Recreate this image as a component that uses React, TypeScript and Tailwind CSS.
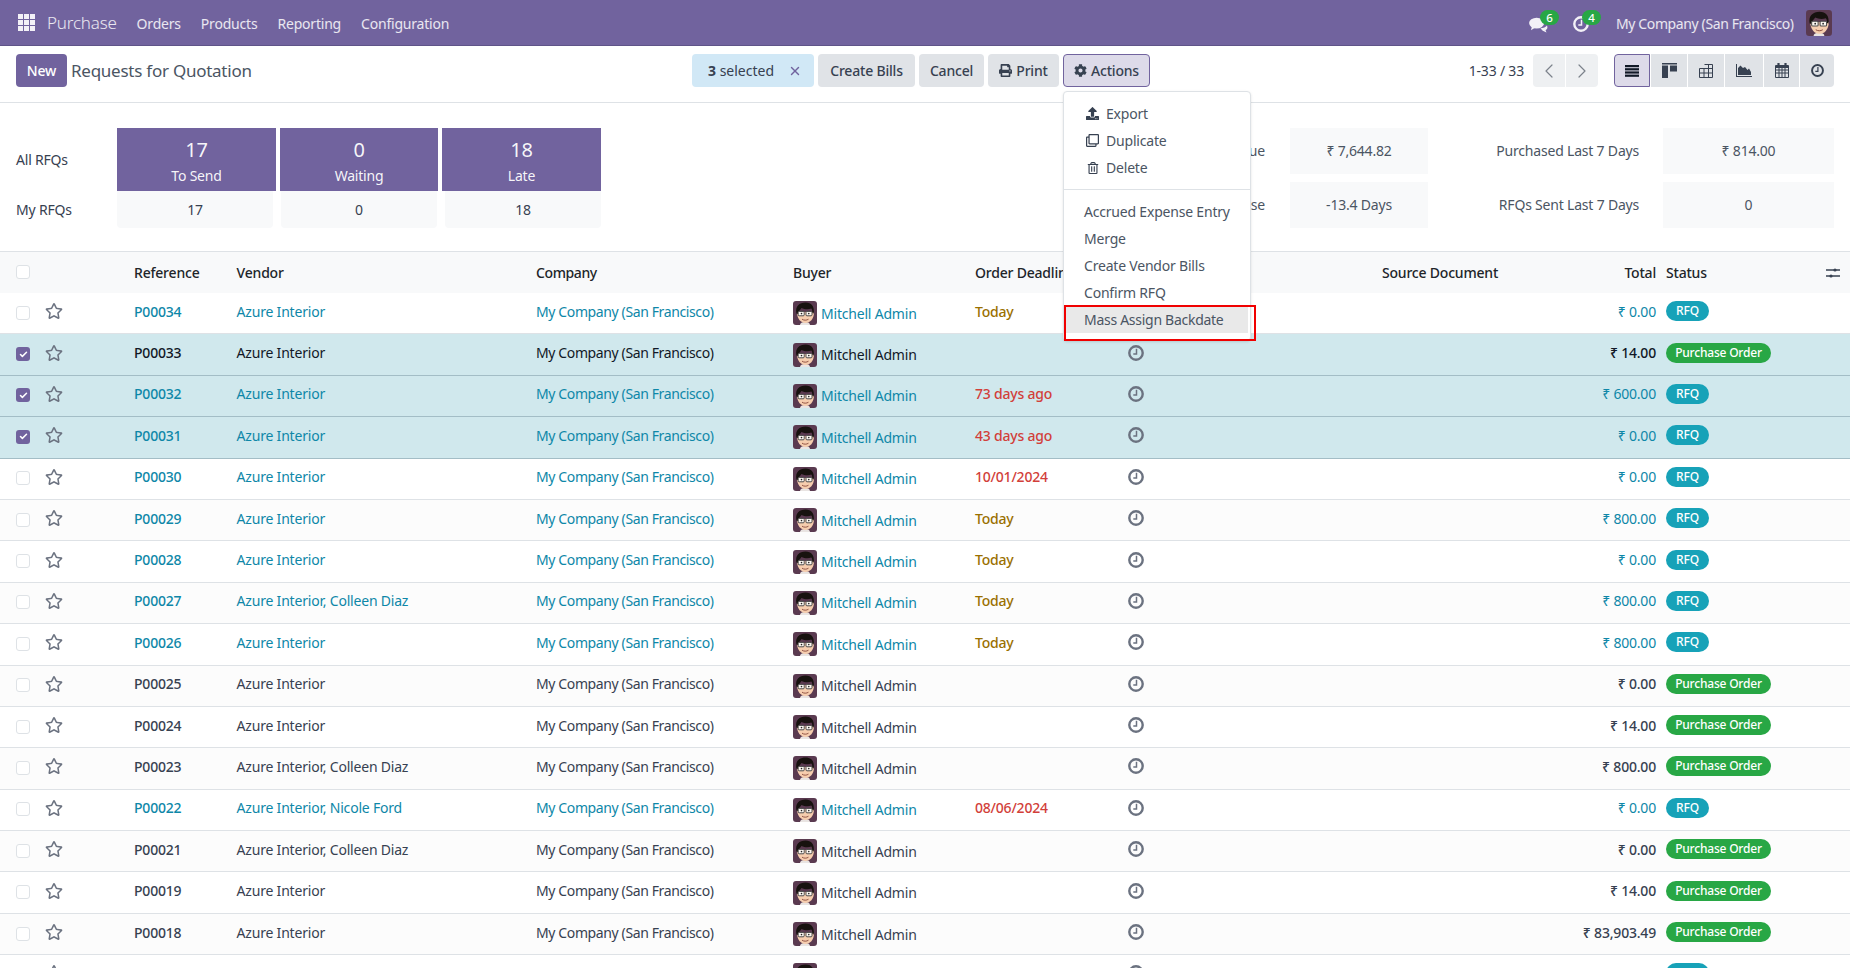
import React from "react";
import { FaRegStar, FaCog, FaPrint, FaRegClone, FaRegTrashAlt, FaUpload } from "react-icons/fa";
import { ChevronLeft, ChevronRight, X, Check } from "lucide-react";

function Avatar({ size = 24 }: { size?: number }) {
  return (
    <svg width={size} height={size} viewBox="0 0 24 24" className="shrink-0">
      <rect width="24" height="24" rx="3" fill="#5a3a50" />
      <path d="M7 24c0-2 2-3 5-3s5 1 5 3z" fill="#e9e4e2" />
      <path d="M4 11c0 7 4 11 8.500 11S21 18 21 11z" fill="#f6cdae" />
      <path d="M3.400 12.500C2 5 6.500 1.500 12.500 1.500c6 0 9 3.500 8.300 11l-1.500-.5c0-2 0-3.500-1-4.500-3 1.300-7 .8-9.800-.5C7.500 8.500 5.500 10 5 13z" fill="#17120f" />
      <rect x="5.200" y="10.400" width="6" height="4.400" rx="1" fill="#fbf6f0" stroke="#4a4a4a" strokeWidth="1" />
      <rect x="13" y="10.400" width="6" height="4.400" rx="1" fill="#fbf6f0" stroke="#4a4a4a" strokeWidth="1" />
      <circle cx="8.500" cy="12.600" r=".8" fill="#222" />
      <circle cx="15.800" cy="12.600" r=".8" fill="#222" />
      <path d="M9 18.200c2 1.300 4.500 1.300 6.500 0" stroke="#8a4b3c" strokeWidth=".9" fill="none" />
    </svg>
  );
}

function Cb({ checked }: { checked?: boolean }) {
  return checked ? (
    <span className="w-[14px] h-[14px] rounded-[3px] bg-[#71639e] flex items-center justify-center">
      <Check size={9} strokeWidth={4} className="text-white" />
    </span>
  ) : (
    <span className="w-[14px] h-[14px] rounded-[3px] border border-[#dee2e6] bg-white block" />
  );
}

function ClockO({ size = 16, color = "#6b7280" }: { size?: number; color?: string }) {
  return (
    <svg width={size} height={size} viewBox="0 0 16 16" fill="none" stroke={color} strokeWidth="2.400" className="shrink-0">
      <circle cx="8" cy="8" r="6.700" />
      <path d="M8.500 3.800V9H5.300" strokeWidth="1.500" />
    </svg>
  );
}

type R = { ref: string; vendor: string; dl?: string; dlc?: string; total: string; st: "RFQ" | "PO"; sel?: boolean };
const rows: R[] = [
  { ref: "P00034", vendor: "Azure Interior", dl: "Today", dlc: "t", total: "₹ 0.00", st: "RFQ" },
  { ref: "P00033", vendor: "Azure Interior", total: "₹ 14.00", st: "PO", sel: true },
  { ref: "P00032", vendor: "Azure Interior", dl: "73 days ago", dlc: "r", total: "₹ 600.00", st: "RFQ", sel: true },
  { ref: "P00031", vendor: "Azure Interior", dl: "43 days ago", dlc: "r", total: "₹ 0.00", st: "RFQ", sel: true },
  { ref: "P00030", vendor: "Azure Interior", dl: "10/01/2024", dlc: "r", total: "₹ 0.00", st: "RFQ" },
  { ref: "P00029", vendor: "Azure Interior", dl: "Today", dlc: "t", total: "₹ 800.00", st: "RFQ" },
  { ref: "P00028", vendor: "Azure Interior", dl: "Today", dlc: "t", total: "₹ 0.00", st: "RFQ" },
  { ref: "P00027", vendor: "Azure Interior, Colleen Diaz", dl: "Today", dlc: "t", total: "₹ 800.00", st: "RFQ" },
  { ref: "P00026", vendor: "Azure Interior", dl: "Today", dlc: "t", total: "₹ 800.00", st: "RFQ" },
  { ref: "P00025", vendor: "Azure Interior", total: "₹ 0.00", st: "PO" },
  { ref: "P00024", vendor: "Azure Interior", total: "₹ 14.00", st: "PO" },
  { ref: "P00023", vendor: "Azure Interior, Colleen Diaz", total: "₹ 800.00", st: "PO" },
  { ref: "P00022", vendor: "Azure Interior, Nicole Ford", dl: "08/06/2024", dlc: "r", total: "₹ 0.00", st: "RFQ" },
  { ref: "P00021", vendor: "Azure Interior, Colleen Diaz", total: "₹ 0.00", st: "PO" },
  { ref: "P00019", vendor: "Azure Interior", total: "₹ 14.00", st: "PO" },
  { ref: "P00018", vendor: "Azure Interior", total: "₹ 83,903.49", st: "PO" },
  { ref: "P00017", vendor: "Azure Interior, Nicole Ford", dl: "08/06/2024", dlc: "r", total: "₹ 0.00", st: "RFQ" },
];

function Row({ r, i }: { r: R; i: number }) {
  const link = r.st === "RFQ";
  const tc = link ? "text-[#0e87a8]" : r.sel ? "text-[#111827]" : "text-[#374151]";
  const bg = r.sel ? "bg-[#d0e8ed] border-[#a3bdc6]" : i % 2 === 1 ? "bg-[#fcfcfc] border-[#dee2e6]" : "bg-white border-[#dee2e6]";
  return (
    <div className={`flex items-center h-[41.4px] shrink-0 border-b pb-[4px] ${bg} ${tc}`}>
      <div className="w-[45px] pl-[16px] pt-[3px] shrink-0"><Cb checked={r.sel} /></div>
      <div className="w-[89px] shrink-0"><FaRegStar size={18} className="text-[#6b7280]" /></div>
      <div className="w-[102.6px] shrink-0 font-medium">{r.ref}</div>
      <div className="w-[299.4px] shrink-0">{r.vendor}</div>
      <div className="w-[257px] shrink-0 tracking-[-0.38px]">My Company (San Francisco)</div>
      <div className="w-[182px] shrink-0 flex items-center gap-[4px] mt-[4px]"><Avatar /><span>Mitchell Admin</span></div>
      <div className={`w-[153px] shrink-0 font-medium ${r.dlc === "t" ? "text-[#9a7000]" : "text-[#d23f3a]"}`}>{r.dl}</div>
      <div className="w-[254px] shrink-0"><ClockO /></div>
      <div className="w-[274px] shrink-0 text-right"><span className={link ? "" : "font-medium"}>{r.total}</span></div>
      <div className="ml-[10px] shrink-0">
        {r.st === "RFQ" ? (
          <span className="block w-[43px] h-[20px] leading-[19px] rounded-full bg-[#17a2b8] text-white text-[12px] font-medium text-center">RFQ</span>
        ) : (
          <span className="block w-[105px] h-[20px] leading-[19px] rounded-full bg-[#28a745] text-white text-[12px] font-medium text-center">Purchase Order</span>
        )}
      </div>
    </div>
  );
}

function Btn({ children, className = "" }: { children: React.ReactNode; className?: string }) {
  return <button className={`h-[33px] rounded-[4px] font-medium flex items-center justify-center gap-[4px] text-[#374151] ${className}`}>{children}</button>;
}

function Item({ icon, children, active }: { icon?: React.ReactNode; children: React.ReactNode; active?: boolean }) {
  return (
    <div className={`h-[27px] flex items-center text-[#4b5563] ${active ? "bg-[#e9e9e9] mx-[2px] pl-[18px] tracking-[-0.28px]" : "pl-[20px]"}`}>
      {icon && <span className="w-[22px] pl-[2px] flex items-center shrink-0">{icon}</span>}
      {children}
    </div>
  );
}

function View({ children, active, w }: { children: React.ReactNode; active?: boolean; w: string }) {
  return <div className={`h-[33px] ${w} flex items-center justify-center ${active ? "bg-[#dddae9] border border-[#71639e] rounded-l-[4px]" : "bg-[#e0e3e7]"}`}>{children}</div>;
}

export default function App() {
  return (
    <div className="relative w-[1850px] h-[968px] overflow-hidden bg-white text-[14px] tracking-[-0.2px] text-[#374151] flex flex-col font-['Noto_Sans',sans-serif]">
      <header className="h-[46px] shrink-0 bg-[#71639e] border-b border-[#5f5488] text-white/85 flex items-center">
        <svg width="17" height="17" viewBox="0 0 17 17" className="ml-[18px] mr-[12px]" fill="#f3f1f7">
          {[0, 6, 12].map((y) => [0, 6, 12].map((x) => <rect key={`${x}-${y}`} x={x} y={y} width="5" height="5" />))}
        </svg>
        <span className="text-[17px] mr-[20px] font-light">Purchase</span>
        <nav className="flex gap-[20px] pt-[1px]">
          <span>Orders</span><span>Products</span><span>Reporting</span><span>Configuration</span>
        </nav>
        <div className="ml-auto flex items-center mr-[18px]">
          <div className="relative w-[44px] h-[20px]">
            <svg width="19" height="16" viewBox="0 0 20 17" className="absolute left-[9px] top-[4px]" fill="#f3f1f7">
              <ellipse cx="8" cy="6.500" rx="8" ry="5.800" />
              <path d="M3 10l-1 4 5-3zM12 12c3 0 6-1.500 7-3 1 2 .5 4-1.500 5l1 2.500-4-2z" />
            </svg>
            <span className="absolute left-[20px] top-[-3px] w-[19px] h-[15px] rounded-full bg-[#28a745] text-white text-[11.500px] font-medium text-center leading-[15px]">6</span>
          </div>
          <div className="relative w-[52px] h-[20px]">
            <span className="absolute left-[9px] top-[3px]"><ClockO size={16} color="#f3f1f7" /></span>
            <span className="absolute left-[18px] top-[-3px] w-[19px] h-[15px] rounded-full bg-[#28a745] text-white text-[11.500px] font-medium text-center leading-[15px]">4</span>
          </div>
          <span className="w-[190px] whitespace-nowrap tracking-[-0.38px] pt-[1px]">My Company (San Francisco)</span>
          <Avatar size={26} />
        </div>
      </header>

      <div className="h-[57px] shrink-0 border-b border-[#dee2e6] flex items-start pt-[8px] pl-[16px] pr-[16px]">
        <button className="h-[33px] w-[51px] rounded-[4px] bg-[#71639e] text-white font-medium">New</button>
        <span className="ml-[4px] text-[17px] leading-[33px] w-[621px] text-[#4b5563] tracking-[-0.25px]">Requests for Quotation</span>
        <div className="flex items-center gap-[4px]">
          <div className="h-[33px] w-[122px] rounded-[4px] bg-[#d1e8f6] flex items-center pl-[16px] pr-[12px] justify-between tracking-normal">
            <span><b className="font-bold">3</b> selected</span>
            <X size={14} strokeWidth={2.5} className="text-[#71639e]" />
          </div>
          <Btn className="w-[97px] bg-[#e0e3e7]">Create Bills</Btn>
          <Btn className="w-[65px] bg-[#e0e3e7]">Cancel</Btn>
          <Btn className="w-[71px] bg-[#e0e3e7]"><FaPrint size={13} />Print</Btn>
          <Btn className="w-[87px] bg-[#dddae9] border border-[#71639e]"><FaCog size={13} />Actions</Btn>
        </div>
        <div className="ml-auto flex items-center">
          <span className="mr-[9px]">1-33 / 33</span>
          <div className="flex gap-[1px] mr-[16px]">
            <div className="w-[32px] h-[33px] bg-[#eef0f2] rounded-l-[4px] flex items-center justify-center"><ChevronLeft size={24} strokeWidth={1.200} className="text-[#7b828b]" /></div>
            <div className="w-[32px] h-[33px] bg-[#eef0f2] rounded-r-[4px] flex items-center justify-center"><ChevronRight size={24} strokeWidth={1.200} className="text-[#7b828b]" /></div>
          </div>
          <div className="flex gap-[1px] text-[#374151]">
            <View w="w-[36px]" active>
              <svg width="14" height="12" viewBox="0 0 14 12" fill="#111827"><rect width="14" height="2.200" /><rect y="3.200" width="14" height="2.200" /><rect y="6.400" width="14" height="2.200" /><rect y="9.600" width="14" height="2.200" /></svg>
            </View>
            <View w="w-[36px]">
              <svg width="15" height="15" viewBox="0 0 15 15" fill="#374151"><rect width="15" height="1.500" /><rect y="2.500" width="6" height="12.500" /><rect x="8" y="2.500" width="7" height="6" /></svg>
            </View>
            <View w="w-[36px]">
              <svg width="14" height="14" viewBox="0 0 14 14" fill="none" stroke="#374151" strokeWidth="1"><path d="M5.500.5h8v13H.5v-9h13M.5 9h13M5 4.500v9M9.500.5v13" /></svg>
            </View>
            <View w="w-[38px]">
              <svg width="16" height="13" viewBox="0 0 16 13" fill="#374151"><path d="M0 0h1v12h15v1H0z" /><path d="M2 11V4l2.500-2.500L7 4l2-1 2.500 3L13 4.500l2 3.500v3z" /></svg>
            </View>
            <View w="w-[35px]">
              <svg width="14" height="15" viewBox="0 0 14 15" fill="none" stroke="#374151" strokeWidth="1"><path d="M.5 2.500h13v12H.5zM.5 7h13M.5 10h13M4 4v11M7 4v11M10 4v11" /><path d="M3.500 0v4M10.500 0v4" strokeWidth="2.200" /><path d="M.5 4h13" strokeWidth="2" /></svg>
            </View>
            <View w="w-[34px] rounded-r-[4px]"><ClockO size={13} color="#374151" /></View>
          </div>
        </div>
      </div>

      <div className="h-[149px] shrink-0 border-b border-[#dee2e6] flex pt-[25px] pl-[16px] pr-[16px]">
        <div className="flex flex-col">
          <div className="flex">
            <div className="w-[101px] flex items-center pb-[1px]">All RFQs</div>
            <div className="flex gap-[4px] text-white/95">
              {[["17", "To Send", "w-[159px]"], ["0", "Waiting", "w-[158px]"], ["18", "Late", "w-[159px]"]].map(([n, l, w]) => (
                <div key={l} className={`${w} h-[63px] bg-[#71639e] flex flex-col items-center pt-[8px]`}>
                  <span className="text-[20px] leading-[28px]">{n}</span>
                  <span className="leading-[24px]">{l}</span>
                </div>
              ))}
            </div>
          </div>
          <div className="flex">
            <div className="w-[101px] flex items-center">My RFQs</div>
            <div className="flex gap-[8px]">
              {["17", "0", "18"].map((n) => (
                <div key={n} className="w-[156px] h-[37px] bg-[#f8f9fa] rounded-b-[4px] flex items-center justify-center">{n}</div>
              ))}
            </div>
          </div>
        </div>
        <div className="ml-auto flex flex-col gap-[8px] text-[#4b5563]">
          {[["Avg Order Value", "₹ 7,644.82", "Purchased Last 7 Days", "₹ 814.00"], ["Lead Time to Purchase", "-13.4 Days", "RFQs Sent Last 7 Days", "0"]].map((r) => (
            <div key={r[0]} className="flex h-[46px] items-center">
              <span className="w-[200px] text-right mr-[25px] pb-[2px]">{r[0]}</span>
              <div className="w-[138px] h-full bg-[#f8f9fa] flex items-center justify-center pb-[2px]">{r[1]}</div>
              <span className="w-[211px] text-right mr-[24px] pb-[2px]">{r[2]}</span>
              <div className="w-[171px] h-full bg-[#f8f9fa] flex items-center justify-center pb-[2px]">{r[3]}</div>
            </div>
          ))}
        </div>
      </div>

      <div className="flex flex-col min-h-0 grow">
        <div className="h-[41px] shrink-0 bg-[#f8f9fa] flex items-center font-medium text-[#212529]">
          <div className="w-[134px] pl-[16px] pb-[2px] shrink-0"><Cb /></div>
          <div className="w-[102.6px] shrink-0">Reference</div>
          <div className="w-[299.4px] shrink-0">Vendor</div>
          <div className="w-[257px] shrink-0 tracking-[-0.38px]">Company</div>
          <div className="w-[182px] shrink-0">Buyer</div>
          <div className="w-[407px] shrink-0 whitespace-nowrap">Order Deadline</div>
          <div className="w-[198px] shrink-0">Source Document</div>
          <div className="w-[76px] shrink-0 text-right">Total</div>
          <div className="ml-[10px] w-[160px] shrink-0">Status</div>
          <svg width="14" height="12" viewBox="0 0 14 12" stroke="#374151" fill="#374151" strokeWidth="1.300" className="shrink-0">
            <path d="M0 3h14M0 9h14" /><circle cx="9" cy="3" r="1.600" stroke="none" /><circle cx="5" cy="9" r="1.600" stroke="none" />
          </svg>
        </div>
        {rows.map((r, i) => <Row key={r.ref} r={r} i={i} />)}
      </div>

      <div className="absolute left-[1063px] top-[91px] w-[188px] h-[250px] py-[8px] bg-white border border-[#dee2e6] rounded-[4px] shadow-sm z-10">
        <Item icon={<FaUpload size={13} className="text-[#374151]" />}>Export</Item>
        <Item icon={<FaRegClone size={13} className="text-[#374151]" />}>Duplicate</Item>
        <Item icon={<FaRegTrashAlt size={12} className="text-[#374151] ml-[1px]" />}>Delete</Item>
        <div className="border-t border-[#dee2e6] my-[8px]" />
        <Item>Accrued Expense Entry</Item>
        <Item>Merge</Item>
        <Item>Create Vendor Bills</Item>
        <Item>Confirm RFQ</Item>
        <Item active>Mass Assign Backdate</Item>
      </div>
      <div className="absolute left-[1064px] top-[305px] w-[192px] h-[36px] border-[2.5px] border-[#f00000] z-20" />
    </div>
  );
}
